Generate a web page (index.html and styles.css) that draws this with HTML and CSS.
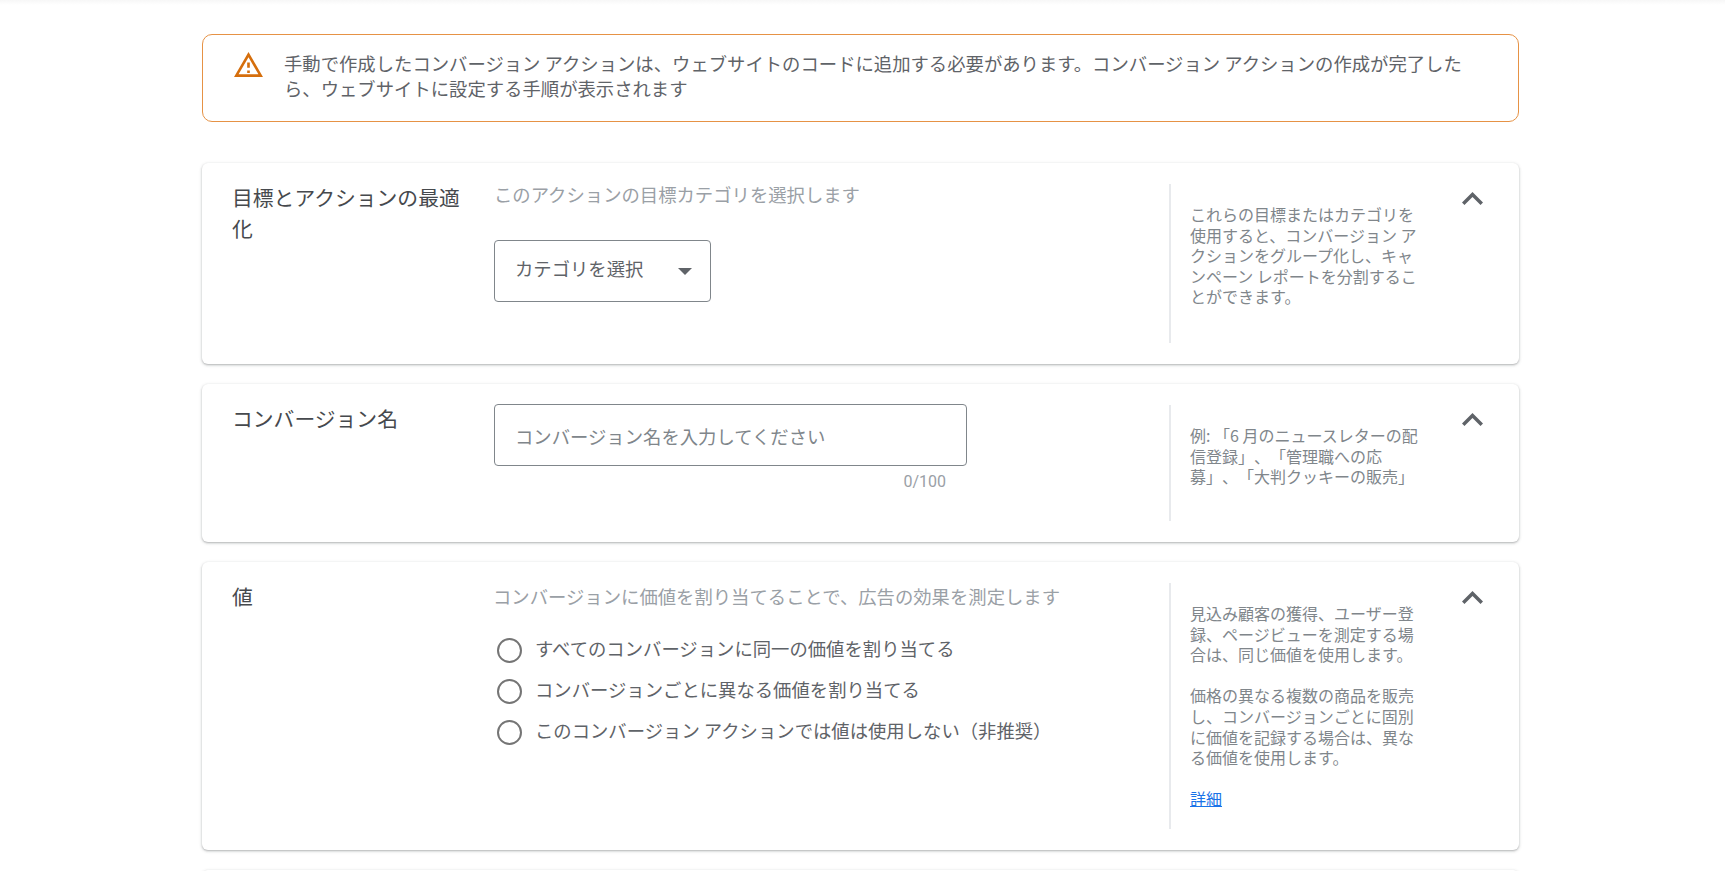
FILE: index.html
```html
<!DOCTYPE html>
<html lang="ja">
<head>
<meta charset="utf-8">
<title>コンバージョン アクション</title>
<link rel="stylesheet" href="styles.css">
</head>
<body>
<main class="page">
  <div class="alert">
    <svg class="alert-icon" viewBox="1 2 22 19" aria-hidden="true"><path d="M12 5.99L19.53 19H4.47L12 5.99M12 2L1 21h22L12 2zm1 14h-2v2h2v-2zm0-6h-2v4h2v-4z"/></svg>
    <p class="alert-text">手動で作成したコンバージョン アクションは、ウェブサイトのコードに追加する必要があります。コンバージョン アクションの作成が完了したら、ウェブサイトに設定する手順が表示されます</p>
  </div>

  <section class="card">
    <h2 class="card-title">目標とアクションの最適化</h2>
    <div class="card-main card-main-goal">
      <p class="hint">このアクションの目標カテゴリを選択します</p>
      <div class="select">
        <span>カテゴリを選択</span>
        <span class="select-arrow"></span>
      </div>
    </div>
    <aside class="side">
      <p>これらの目標またはカテゴリを使用すると、コンバージョン アクションをグループ化し、キャンペーン レポートを分割することができます。</p>
    </aside>
    <svg class="chevron" viewBox="6 8 12 7.41" aria-hidden="true"><path d="M12 8l-6 6 1.41 1.41L12 10.83l4.59 4.58L18 14z"/></svg>
  </section>

  <section class="card">
    <h2 class="card-title">コンバージョン名</h2>
    <div class="card-main card-main-name">
      <div class="input">コンバージョン名を入力してください</div>
      <div class="counter">0/100</div>
    </div>
    <aside class="side">
      <p>例: 「6 月のニュースレターの配信登録」、「管理職への応募」、「大判クッキーの販売」</p>
    </aside>
    <svg class="chevron" viewBox="6 8 12 7.41" aria-hidden="true"><path d="M12 8l-6 6 1.41 1.41L12 10.83l4.59 4.58L18 14z"/></svg>
  </section>

  <section class="card">
    <h2 class="card-title">値</h2>
    <div class="card-main">
      <p class="hint hint-value">コンバージョンに価値を割り当てることで、広告の効果を測定します</p>
      <ul class="radios">
        <li class="radio"><span class="radio-ring"></span><span class="radio-label">すべてのコンバージョンに同一の価値を割り当てる</span></li>
        <li class="radio"><span class="radio-ring"></span><span class="radio-label">コンバージョンごとに異なる価値を割り当てる</span></li>
        <li class="radio"><span class="radio-ring"></span><span class="radio-label">このコンバージョン アクションでは値は使用しない（非推奨）</span></li>
      </ul>
    </div>
    <aside class="side">
      <p>見込み顧客の獲得、ユーザー登録、ページビューを測定する場合は、同じ価値を使用します。</p>
      <p>価格の異なる複数の商品を販売し、コンバージョンごとに固別に価値を記録する場合は、異なる価値を使用します。</p>
      <p><a class="side-link" href="#">詳細</a></p>
    </aside>
    <svg class="chevron" viewBox="6 8 12 7.41" aria-hidden="true"><path d="M12 8l-6 6 1.41 1.41L12 10.83l4.59 4.58L18 14z"/></svg>
  </section>

  <section class="card card-next"></section>
</main>
</body>
</html>
```
FILE: styles.css
```css
* {
  box-sizing: border-box;
}

html,
body {
  margin: 0;
  height: 871px;
  overflow: hidden;
  background: #fff;
}

body {
  font-family: "Noto Sans CJK JP", "Noto Sans", sans-serif;
  color: #5f6368;
  text-spacing-trim: space-all;
  background: linear-gradient(#f7f7f7, #fff 5px);
}

p,
h2,
ul {
  margin: 0;
  padding: 0;
}

.page {
  width: 1317px;
  margin-left: 202px;
  padding-top: 34px;
  display: flex;
  flex-direction: column;
  gap: 20px;
}

.alert {
  display: flex;
  height: 88px;
  margin-bottom: 21px;
  padding: 16px 50px 0 31px;
  gap: 21px;
  border: 1.5px solid #e69245;
  border-radius: 10px;
}

.alert-icon {
  flex: none;
  width: 29px;
  height: 25px;
  margin-top: 1px;
  fill: #d56e0c;
}

.alert-text {
  font-size: 18.35px;
  line-height: 25.3px;
}

.card {
  display: flex;
  padding: 21px 0 21px 30px;
  background: #fff;
  border-radius: 6px;
  box-shadow: 0 1px 3px 1px rgba(60, 64, 67, 0.1), 0 1px 2px rgba(60, 64, 67, 0.3);
}

.card-next {
  height: 60px;
}

.card-title {
  flex: none;
  width: 262px;
  margin-top: -2px;
  padding-right: 20px;
  font-size: 20.8px;
  font-weight: 400;
  line-height: 30.5px;
  color: #46494d;
}

.card-main {
  flex: 1;
  min-width: 0;
}

.card-main-goal {
  padding-bottom: 41px;
}

.card-main-name {
  padding-bottom: 30px;
}

.hint {
  margin-top: -1px;
  font-size: 18.35px;
  line-height: 22px;
  color: #9aa0a6;
}

.hint-value {
  margin-left: -1px;
  padding-top: 3px;
}

.select {
  display: flex;
  align-items: center;
  justify-content: space-between;
  width: 217px;
  height: 62px;
  margin-top: 35px;
  padding: 0 18px 6px 20px;
  border: 1px solid #80868b;
  border-radius: 4px;
  font-size: 18.35px;
}

.select-arrow {
  width: 0;
  height: 0;
  margin-top: 7px;
  border-left: 7px solid transparent;
  border-right: 7px solid transparent;
  border-top: 7px solid #5f6368;
}

.input {
  display: flex;
  align-items: center;
  width: 473px;
  height: 62px;
  margin-top: -1px;
  padding: 2px 0 0 20px;
  border: 1px solid #80868b;
  border-radius: 4px;
  font-size: 18.35px;
  color: #80868b;
}

.counter {
  width: 452px;
  margin-top: 6px;
  font-family: Roboto, sans-serif;
  font-size: 16px;
  line-height: 19px;
  text-align: right;
  color: #9aa0a6;
}

.radios {
  margin-top: 23px;
  list-style: none;
}

.radio {
  display: flex;
  align-items: center;
  height: 41px;
  padding-left: 3px;
  gap: 13px;
  font-size: 18.35px;
  color: #5f6368;
}

.radio-label {
  margin-bottom: 5px;
}

.radio-ring {
  flex: none;
  width: 25px;
  height: 25px;
  border: 2.5px solid #757575;
  border-radius: 50%;
}

.side {
  flex: none;
  width: 252px;
  padding: 20px 0 20px 19px;
  border-left: 2px solid #e8eaed;
  font-size: 16px;
  line-height: 20.6px;
  color: #80868b;
}

.side p + p {
  margin-top: 20.6px;
}

.side-link {
  color: #1a73e8;
}

.chevron {
  flex: none;
  width: 21px;
  height: 13px;
  margin: 8px 36px 0 41px;
  fill: #5f6368;
}
```
